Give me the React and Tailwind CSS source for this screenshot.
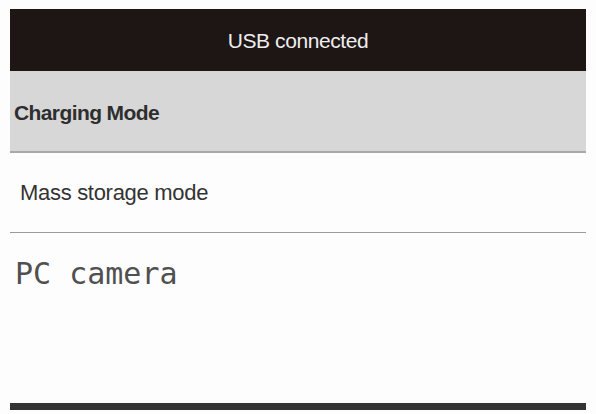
export default function App() {
  return (
    <div className="w-[596px] h-[414px] bg-[#fdfdfd] px-[10px] pt-[9px] flex flex-col">
      <div className="h-[62px] bg-[#1e1515] flex items-center justify-center">
        <span className="text-[#eeeeee] text-[21px] tracking-[-0.4px] font-['Liberation_Sans',sans-serif] mt-[2px]">
          USB connected
        </span>
      </div>

      <div className="h-[82px] bg-[#d7d7d7] border-b-2 border-[#a9a9a9] flex items-center pl-[4px]">
        <span className="text-[#2e2e2e] text-[21px] font-semibold tracking-[-0.6px] font-['Liberation_Sans',sans-serif] mt-[3px]">
          Charging Mode
        </span>
      </div>

      <div className="h-[80px] border-b border-[#9a9a9a] flex items-center pl-[10px]">
        <span className="text-[#333333] text-[22px] tracking-[-0.3px] font-['Liberation_Sans',sans-serif]">
          Mass storage mode
        </span>
      </div>

      <div className="h-[170px] pt-[23px] pl-[5px]">
        <span className="text-[#505050] text-[30px] leading-[36px] font-['DejaVu_Sans_Mono',monospace]">
          PC camera
        </span>
      </div>

      <div className="h-[7px] bg-[#333333]" />
    </div>
  )
}
